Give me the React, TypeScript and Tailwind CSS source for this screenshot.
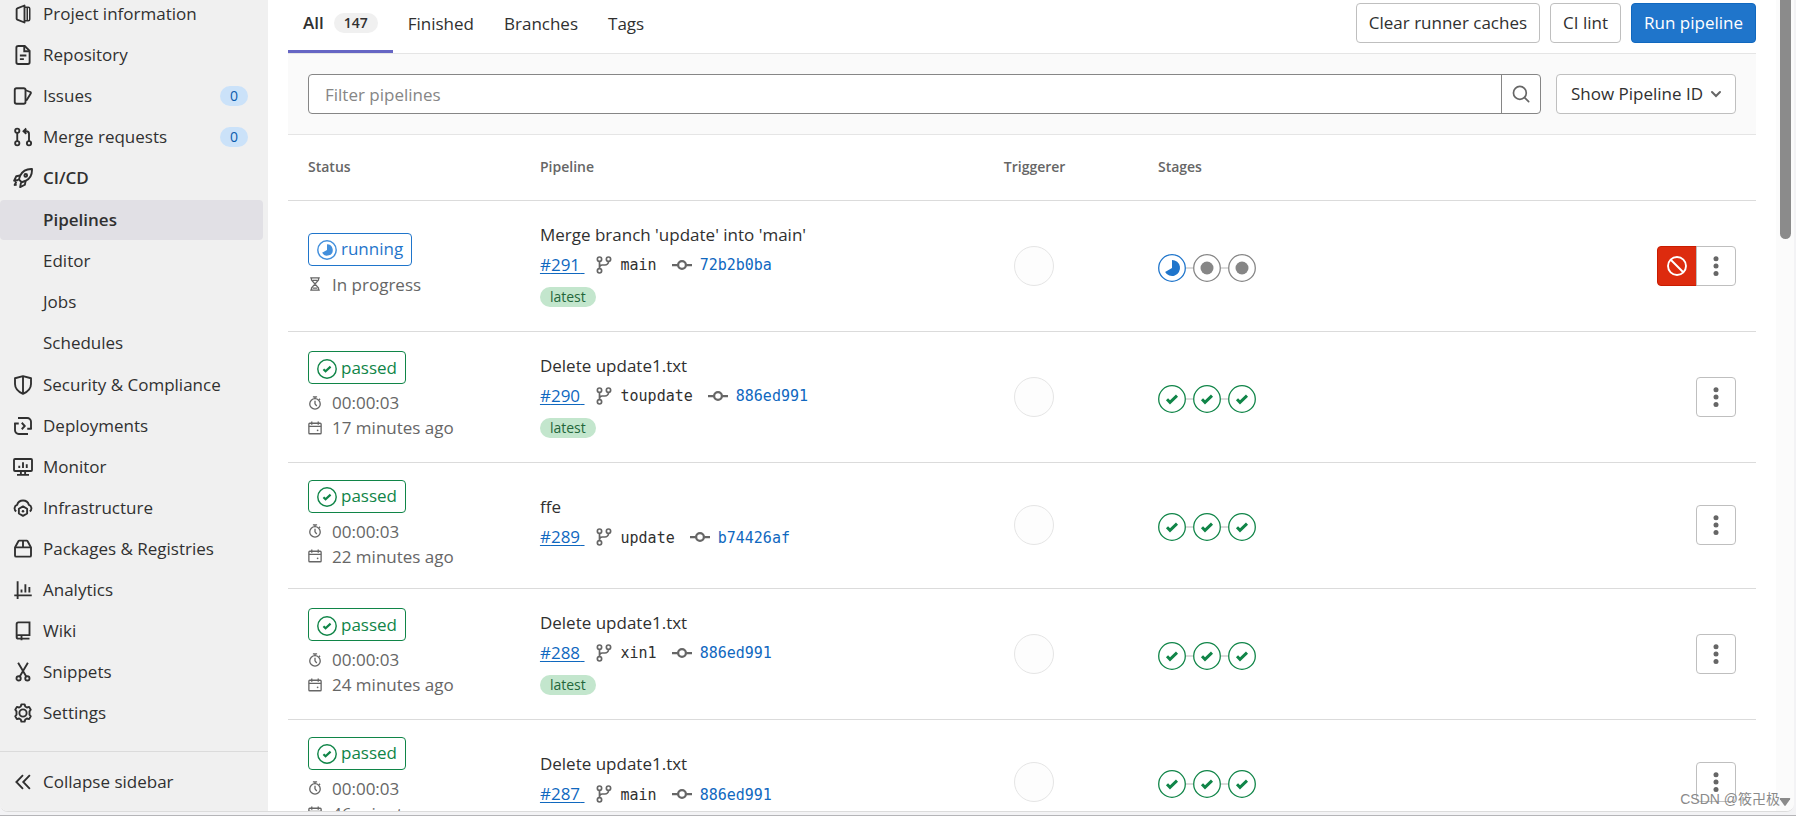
import type { ReactNode } from "react"
import clsx from "clsx"

type IconProps = { children: ReactNode; className?: string }

function Icon({ children, className = "size-5" }: IconProps) {
  return (
    <svg
      viewBox="0 0 16 16"
      fill="none"
      stroke="currentColor"
      strokeWidth="1.5"
      className={clsx("shrink-0", className)}
      aria-hidden="true"
    >
      {children}
    </svg>
  )
}

const icons = {
  project: (
    <>
      <path d="M9.2 1.2v13.6L3.4 12.5a.8.8 0 0 1-.5-.7V4.2c0-.3.2-.6.5-.7z" strokeLinejoin="round" />
      <path d="M9.2 2.6h3a1.2 1.2 0 0 1 1.2 1.2v8.4a1.2 1.2 0 0 1-1.2 1.2h-3M11.4 3v10" strokeWidth="1.2" />
    </>
  ),
  repository: (
    <>
      <path d="M3.8.8h5.6l3.9 3.9v9.1a1.4 1.4 0 0 1-1.4 1.4H4.1a1.4 1.4 0 0 1-1.4-1.4V2.2A1.4 1.4 0 0 1 4.1.8z" />
      <path d="M9 1v4h4M5.5 11.3h3.2M5.5 8.4h5.2" />
    </>
  ),
  issues: (
    <>
      <rect x="1.4" y="1.8" width="8.6" height="12.4" rx="1.4" />
      <path d="m10.2 3.4 3.6 1.4a.8.8 0 0 1 .5 1L11 11.2l-.8-.2" strokeLinejoin="round" />
    </>
  ),
  merge: (
    <>
      <circle cx="3.4" cy="3" r="1.7" />
      <circle cx="3.4" cy="13" r="1.7" />
      <circle cx="12.8" cy="13" r="1.7" />
      <path d="M3.4 4.8v6.4M12.8 11.2V5.6a2.2 2.2 0 0 0-2.2-2.2H8.6M10.6 1.2 8.4 3.4l2.2 2.1" />
    </>
  ),
  rocket: (
    <>
      <path d="M15.2.8c-4.4-.2-7.4 1.2-9.4 5.2L4.7 9.2 7 11.4l3.2-1.2c4-2 5.2-5 5-9.4z" strokeLinejoin="round" />
      <path d="M5.7 6 2.6 6.6.9 10.2l3.300-.6M10.100 10.300l-.6 3.100-3.800 1.900.7-3.700M2.600 11l-1.300 2.600 1.700-.3" strokeLinejoin="round" />
      <circle cx="10.2" cy="5.9" r="1.1" />
    </>
  ),
  shield: (
    <>
      <path d="M8 .9 1.6 2.6v4.6c0 3.6 2.6 6.2 6.4 7.9 3.8-1.7 6.4-4.3 6.4-7.9V2.6z" strokeLinejoin="round" />
      <path d="M8 1v14" />
    </>
  ),
  deploy: (
    <>
      <path d="M4 1.6h7.4a3 3 0 0 1 3 3v5.8M12 14.4H4.6a3 3 0 0 1-3-3V5.6" />
      <path d="M1 6h3.6M11.4 10.2H15" />
      <path d="M7 5.4 9.4 8 7 10.6" />
    </>
  ),
  monitor: (
    <>
      <rect x=".8" y="1.6" width="14.4" height="9.6" rx=".8" />
      <path d="M3.2 14.3h9.6M6.3 11.4v2.8M9.7 11.4v2.8M5 6.9v1.9M8 4.2v4.6M11 5.7v3.1" />
    </>
  ),
  infrastructure: (
    <>
      <path d="M2.6 10.7a2.900 2.900 0 0 1 .7-5.200 4.900 4.900 0 0 1 9.400 0 2.900 2.900 0 0 1 .7 5.200" />
      <path d="m8 6.700 3.300 1.900v3.800L8 14.300l-3.300-1.900V8.600z" strokeLinejoin="round" />
      <circle cx="8" cy="10.5" r="1" fill="currentColor" stroke="none" />
    </>
  ),
  packages: (
    <>
      <path d="M1.6 6.8 4.3 1.8a1 1 0 0 1 .8-.5h5.8a1 1 0 0 1 .8.5l2.7 5v6.3a1 1 0 0 1-1 1H2.6a1 1 0 0 1-1-1z" />
      <path d="M1.6 6.7h12.8M8 1.3v5.4" />
    </>
  ),
  analytics: <path d="M3.7 1v14.2M1 12.3h14M6.8 7.6v2.4M9.9 3.4V10M13.1 5.6V10" />,
  wiki: (
    <>
      <path d="M2.9 12.7V2.5A1.4 1.4 0 0 1 4.3 1.1h8.9v10.2H4.3a1.4 1.4 0 0 0 0 2.8h8.9" />
      <path d="M6.8 11.5v3.9" />
    </>
  ),
  snippets: (
    <>
      <circle cx="4.5" cy="13.1" r="1.7" />
      <circle cx="11.5" cy="13.1" r="1.7" />
      <path d="m4.1.6 6.5 11M11.9.6 5.4 11.6" />
    </>
  ),
  settings: (
    <>
      <path
        d="M6.7 1.1h2.6l.5 1.7 1.3.8 1.8-.5 1.3 2.3-1 1.3v2.6l1 1.3-1.3 2.3-1.8-.5-1.3.8-.5 1.7H6.7l-.5-1.7-1.3-.8-1.8.5-1.3-2.3 1-1.3V6.7l-1-1.3 1.3-2.3 1.8.5 1.3-.8z"
        strokeLinejoin="round"
      />
      <circle cx="8" cy="8" r="2.9" />
    </>
  ),
  collapse: <path d="M8 2.5 2.7 8 8 13.5M13.5 2.5 8.2 8l5.3 5.5" />,
  branch: (
    <>
      <circle cx="4" cy="2.8" r="1.9" />
      <circle cx="12" cy="2.8" r="1.9" />
      <circle cx="4" cy="13.2" r="1.9" />
      <path d="M4 4.8v6.4M12 4.8A3.2 3.2 0 0 1 8.8 8H6.4A2.4 2.4 0 0 0 4 10" />
    </>
  ),
  commit: (
    <>
      <circle cx="8" cy="8" r="3.1" strokeWidth="1.8" />
      <path d="M0 8h4.6M11.4 8H16" strokeWidth="1.8" />
    </>
  ),
  hourglass: (
    <path d="M2.5 1h11M2.5 15h11M4 1v2.500L8 8l4-4.500V1M4 15v-2.500L8 8l4 4.500V15M5.400 12.800h5.200M5.400 3.800h5.200" />
  ),
  timer: (
    <>
      <circle cx="8" cy="9" r="6" />
      <path d="M8 5.5V9l2 2.4M5.6.9h4.8M8 1v2M12.6 3.2l1.2 1.2" />
    </>
  ),
  calendar: (
    <>
      <rect x="1" y="2.6" width="14" height="12" rx="1" />
      <path d="M1 6.2h14M4.3.6v3.6M11.7.6v3.6" />
      <circle cx="11" cy="10.6" r="1" fill="currentColor" stroke="none" />
    </>
  ),
  search: (
    <>
      <circle cx="7" cy="7" r="5.7" />
      <path d="m11.2 11.2 3.6 3.5" strokeLinecap="round" />
    </>
  ),
  cancel: (
    <>
      <circle cx="8" cy="8" r="7.2" />
      <path d="m3 3 10 10" />
    </>
  ),
  kebab: (
    <g fill="currentColor" stroke="none">
      <circle cx="8" cy="2.1" r="2" />
      <circle cx="8" cy="8" r="2" />
      <circle cx="8" cy="13.9" r="2" />
    </g>
  ),
}

type NavItem = { label: string; icon: keyof typeof icons; count?: number }

const navTop: NavItem[] = [
  { label: "Project information", icon: "project" },
  { label: "Repository", icon: "repository" },
  { label: "Issues", icon: "issues", count: 0 },
  { label: "Merge requests", icon: "merge", count: 0 },
]

const navBottom: NavItem[] = [
  { label: "Security & Compliance", icon: "shield" },
  { label: "Deployments", icon: "deploy" },
  { label: "Monitor", icon: "monitor" },
  { label: "Infrastructure", icon: "infrastructure" },
  { label: "Packages & Registries", icon: "packages" },
  { label: "Analytics", icon: "analytics" },
  { label: "Wiki", icon: "wiki" },
  { label: "Snippets", icon: "snippets" },
  { label: "Settings", icon: "settings" },
]

const ciPages = ["Pipelines", "Editor", "Jobs", "Schedules"]

type Pipeline = {
  id: number
  title: string
  branch: string
  sha: string
  running?: boolean
  latest?: boolean
  finished?: string
}

const pipelines: Pipeline[] = [
  { id: 291, title: "Merge branch 'update' into 'main'", branch: "main", sha: "72b2b0ba", running: true, latest: true },
  { id: 290, title: "Delete update1.txt", branch: "toupdate", sha: "886ed991", latest: true, finished: "17 minutes ago" },
  { id: 289, title: "ffe", branch: "update", sha: "b74426af", finished: "22 minutes ago" },
  { id: 288, title: "Delete update1.txt", branch: "xin1", sha: "886ed991", latest: true, finished: "24 minutes ago" },
  { id: 287, title: "Delete update1.txt", branch: "main", sha: "886ed991", finished: "46 minutes ago" },
]

function NavLink({ label, icon, count, bold }: NavItem & { bold?: boolean }) {
  return (
    <li>
      <a href="#" className={clsx("flex h-10 items-center pl-[13px] pr-5", bold && "font-semibold")}>
        <Icon>{icons[icon]}</Icon>
        <span className="ml-[10px] flex-1">{label}</span>
        {count !== undefined && (
          <span className="w-7 rounded-full bg-[#cbe2f9] text-center text-sm leading-5 text-[#0b5cad]">{count}</span>
        )}
      </a>
    </li>
  )
}

function Sidebar() {
  return (
    <nav className="flex w-[268px] shrink-0 flex-col bg-[#f0f0f0] text-[#303030]">
      <ul className="-mt-1.5 flex flex-1 flex-col gap-px">
        {navTop.map((item) => (
          <NavLink key={item.label} {...item} />
        ))}
        <NavLink label="CI/CD" icon="rocket" bold />
        <li className="my-px">
          <ul className="flex flex-col gap-px">
            {ciPages.map((page, i) => (
              <li key={page} className="pr-[5px]">
                <a
                  href="#"
                  className={clsx(
                    "flex h-10 items-center rounded pl-[43px]",
                    i === 0 && "bg-[#e1e0e5] font-semibold",
                  )}
                >
                  {page}
                </a>
              </li>
            ))}
          </ul>
        </li>
        {navBottom.map((item) => (
          <NavLink key={item.label} {...item} />
        ))}
      </ul>
      <button className="flex h-[60px] items-center gap-[10px] border-t border-[#dbdbdb] pl-[13px]">
        <Icon>{icons.collapse}</Icon>
        Collapse sidebar
      </button>
    </nav>
  )
}

const tabs = ["Finished", "Branches", "Tags"]

function Header() {
  return (
    <div className="flex h-[54px] items-stretch border-b border-[#e5e5e5]">
      <div className="flex">
        <a
          href="#"
          className="flex items-center gap-[10px] border-b-3 border-[#6666c4] px-[15px] pb-1 font-semibold"
        >
          All
          <span className="rounded-full bg-[#f0f0f0] px-[10px] text-sm leading-5">147</span>
        </a>
        {tabs.map((tab) => (
          <a key={tab} href="#" className="flex items-center px-[15px] pb-1.5">
            {tab}
          </a>
        ))}
      </div>
      <div className="ml-auto flex gap-[10px] pb-[10px] pt-[3px]">
        <button className="rounded border border-[#bfbfbf] px-3">Clear runner caches</button>
        <button className="rounded border border-[#bfbfbf] px-3">CI lint</button>
        <button className="rounded border border-[#1068bf] bg-[#1f75cb] px-3 text-white">Run pipeline</button>
      </div>
    </div>
  )
}

function FilterBar() {
  return (
    <div className="flex gap-[15px] border-b border-[#e5e5e5] bg-[#fafafa] p-5">
      <form className="flex h-10 flex-1 rounded border border-[#868686] bg-white">
        <input
          type="text"
          aria-label="Filter pipelines"
          placeholder="Filter pipelines"
          className="min-w-0 flex-1 px-4 pt-0.5 outline-none placeholder:text-[#868686]"
        />
        <button
          type="button"
          aria-label="Search"
          className="flex w-[39px] items-center justify-center border-l border-[#868686] text-[#666]"
        >
          <Icon className="size-[18px]">{icons.search}</Icon>
        </button>
      </form>
      <div className="relative">
        <select
          aria-label="Pipeline key"
          className="h-10 w-[180px] appearance-none rounded border border-[#bfbfbf] bg-white pl-[14px]"
        >
          <option>Show Pipeline ID</option>
          <option>Show Pipeline IID</option>
        </select>
        <svg
          viewBox="0 0 16 16"
          className="pointer-events-none absolute right-3 top-3 size-4 text-[#666]"
          fill="none"
          stroke="currentColor"
          strokeWidth="2"
          aria-hidden="true"
        >
          <path d="m4 6 4 4 4-4" strokeLinecap="round" />
        </svg>
      </div>
    </div>
  )
}

function CheckMark() {
  return <path d="m9 14.3 3 3L19 10.700" fill="none" stroke="currentColor" strokeWidth="3" />
}

function RunningMark() {
  return <path d="M14 6a8 8 0 1 1-6.900 12L14 14z" fill="currentColor" />
}

function StatusBadge({ running }: { running?: boolean }) {
  return (
    <a
      href="#"
      className={clsx(
        "inline-flex h-[33px] items-center gap-1 rounded border px-2",
        running ? "border-[#1f75cb] text-[#1f75cb]" : "border-[#108548] text-[#108548]",
      )}
    >
      <svg
        viewBox="0 0 28 28"
        className={clsx("mt-0.5 size-5", running && "text-[#428fdc]")}
        aria-hidden="true"
      >
        <circle cx="14" cy="14" r="12.9" fill="none" stroke="currentColor" strokeWidth="2" />
        {running ? <RunningMark /> : <CheckMark />}
      </svg>
      {running ? "running" : "passed"}
    </a>
  )
}

function Stage({ kind }: { kind: "passed" | "running" | "created" }) {
  return (
    <svg
      viewBox="0 0 28 28"
      className={clsx(
        "size-7",
        kind === "passed" && "text-[#108548]",
        kind === "running" && "text-[#1f75cb]",
        kind === "created" && "text-[#868686]",
      )}
      role="img"
      aria-label={kind}
    >
      <circle cx="14" cy="14" r="13.3" fill="#fff" stroke="currentColor" strokeWidth="1.3" />
      {kind === "passed" && <CheckMark />}
      {kind === "running" && <RunningMark />}
      {kind === "created" && <circle cx="14" cy="14" r="6.5" fill="currentColor" />}
    </svg>
  )
}

function Stages({ running }: { running?: boolean }) {
  const kinds = running ? (["running", "created", "created"] as const) : (["passed", "passed", "passed"] as const)
  return (
    <div className="flex items-center pt-1">
      {kinds.map((kind, i) => (
        <div key={i} className="flex items-center">
          {i > 0 && <span className="h-0.5 w-[7px] bg-[#dbdbdb]" />}
          <Stage kind={kind} />
        </div>
      ))}
    </div>
  )
}

function StatusLine({ icon, children }: { icon: keyof typeof icons; children: ReactNode }) {
  return (
    <p className="flex items-center gap-[10px] leading-[25px] text-[#666]">
      <Icon className="size-[14px]">{icons[icon]}</Icon>
      {children}
    </p>
  )
}

function PipelineRow({ pipeline }: { pipeline: Pipeline }) {
  const { id, title, branch, sha, running, latest, finished } = pipeline
  return (
    <tr className="border-b border-[#dbdbdb]">
      <td className="px-5 pb-[19px] pt-[17px]">
        <div className="mb-1.5 flex">
          <StatusBadge running={running} />
        </div>
        {running ? (
          <StatusLine icon="hourglass">In progress</StatusLine>
        ) : (
          <>
            <StatusLine icon="timer">00:00:03</StatusLine>
            <StatusLine icon="calendar">{finished}</StatusLine>
          </>
        )}
      </td>
      <td className="whitespace-nowrap px-5 py-[18px]">
        <p className="leading-8">{title}</p>
        <div className="flex h-9 items-center pb-2">
          <a href="#" className="text-[#1068bf] underline underline-offset-2">
            #{id}&nbsp;
          </a>
          <Icon className="ml-[10px] size-[18px] text-[#666]">{icons.branch}</Icon>
          <a href="#" className="ml-2 pt-0.5 font-['DejaVu_Sans_Mono',monospace] text-[15px]">
            {branch}
          </a>
          <Icon className="ml-[15px] size-5 text-[#666]">{icons.commit}</Icon>
          <a href="#" className="ml-2 pt-0.5 font-['DejaVu_Sans_Mono',monospace] text-[15px] text-[#1068bf]">
            {sha}
          </a>
        </div>
        {latest && (
          <div className="flex pb-1.5">
            <span className="rounded-full bg-[#c3e6cd] px-[10px] text-sm leading-5 text-[#24663b]">latest</span>
          </div>
        )}
      </td>
      <td className="px-[30px]">
        <a href="#" aria-label="Triggerer" className="block size-10 rounded-full border border-[#e5e5e5] bg-[#fdfdfd]" />
      </td>
      <td className="px-5">
        <Stages running={running} />
      </td>
      <td className="px-5">
        <div className="flex justify-end">
          {running && (
            <button
              aria-label="Cancel"
              className="flex size-10 items-center justify-center rounded-l border border-[#c91c00] bg-[#dd2b0e] text-white"
            >
              <Icon>{icons.cancel}</Icon>
            </button>
          )}
          <button
            aria-label="More actions"
            className={clsx(
              "flex size-10 items-center justify-center border border-[#bfbfbf] text-[#666]",
              running ? "-ml-px rounded-r" : "rounded",
            )}
          >
            <Icon>{icons.kebab}</Icon>
          </button>
        </div>
      </td>
    </tr>
  )
}

function PipelineTable() {
  return (
    <table className="w-full table-fixed">
      <thead>
        <tr className="h-[65px] border-b border-[#dbdbdb] text-left text-sm text-[#666]">
          <th className="w-[15.8%] px-5 font-semibold">Status</th>
          <th className="w-[31.6%] px-5 font-semibold">Pipeline</th>
          <th className="w-[10.5%] px-5 font-semibold">Triggerer</th>
          <th className="w-[21.1%] px-5 font-semibold">Stages</th>
          <th className="px-5" aria-label="Actions" />
        </tr>
      </thead>
      <tbody>
        {pipelines.map((pipeline) => (
          <PipelineRow key={pipeline.id} pipeline={pipeline} />
        ))}
      </tbody>
    </table>
  )
}

export default function App() {
  return (
    <div className="relative flex h-screen flex-col overflow-hidden border-b border-[#b5b5b8] bg-[#f3f3f5] pb-[3px] pr-0.5 font-['Open_Sans',sans-serif] text-[17px] text-[#303030]">
      <div className="flex min-h-0 flex-1 overflow-hidden rounded-b-lg border-b border-[#dcdcdc] bg-white">
        <Sidebar />
        <main className="min-w-0 flex-1 overflow-hidden px-5">
          <Header />
          <FilterBar />
          <PipelineTable />
        </main>
        <div className="flex w-[18px] shrink-0 flex-col items-center justify-between bg-[#fbfbfb] pb-1">
          <span className="h-[239px] w-[11px] rounded-b-full bg-[#8b8b8b]" />
          <svg viewBox="0 0 12 10" className="h-[10px] w-3" aria-hidden="true">
            <path d="M1.5 1h9a.8.8 0 0 1 .6 1.2L6.700 8.500a.9.9 0 0 1-1.400 0L.9 2.200A.8.8 0 0 1 1.500 1z" fill="#8b8b8b" />
          </svg>
        </div>
      </div>
      <span className="absolute bottom-1.5 right-4 font-['Liberation_Sans','Noto_Sans_CJK_SC',sans-serif] text-sm text-[#8a8a8a]">
        CSDN @筱卍极
      </span>
    </div>
  )
}
